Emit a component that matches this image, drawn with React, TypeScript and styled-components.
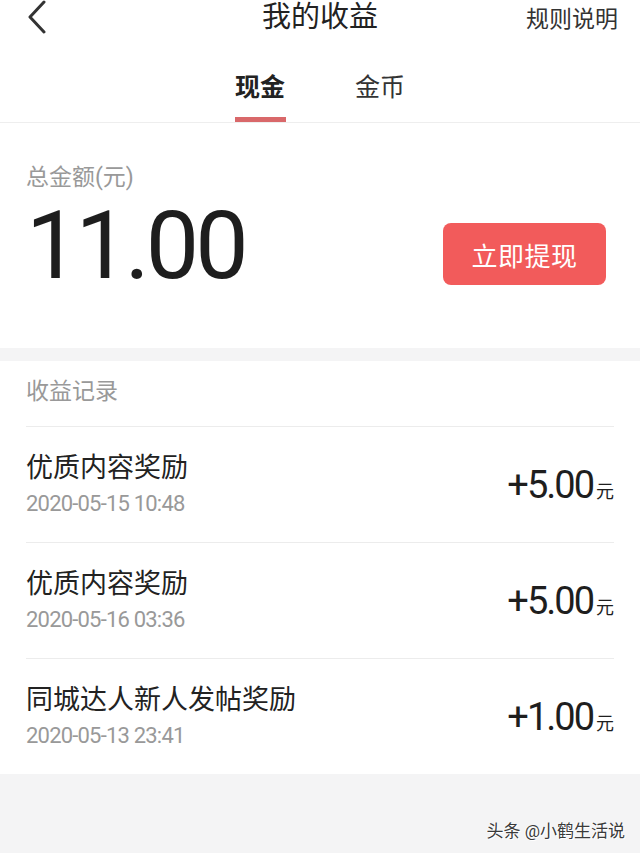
import styled, { createGlobalStyle } from "styled-components";

const GlobalStyle = createGlobalStyle`
  body {
    margin: 0;
    background: #f4f4f5;
    font-family: Roboto, "Noto Sans CJK SC", sans-serif;
    color: #222;
  }
`;

const Page = styled.div`
  width: 640px;
  min-height: 853px;
  background: #f4f4f5;
  display: flex;
  flex-direction: column;
`;

const Top = styled.div`
  background: #fff;
  border-bottom: 1px solid #eeeeee;
`;

const Header = styled.div`
  height: 34px;
  display: flex;
  align-items: center;
  justify-content: space-between;
  position: relative;
  padding: 0 22px 0 26px;
`;

const Title = styled.div`
  position: absolute;
  left: 0;
  right: 0;
  text-align: center;
  font-size: 29px;
  line-height: 34px;
  color: #222;
  pointer-events: none;
`;

const Back = styled.div`
  display: flex;
  align-items: center;
`;

const Rule = styled.div`
  font-size: 23px;
  color: #333;
`;

const Tabs = styled.div`
  height: 88px;
  display: flex;
  justify-content: center;
  gap: 69px;
`;

const Tab = styled.div<{ $active?: boolean }>`
  display: flex;
  flex-direction: column;
  align-items: center;
  padding-top: 39px;
  font-size: 25px;
  line-height: 30px;
  font-weight: ${(p) => (p.$active ? 700 : 400)};
  color: ${(p) => (p.$active ? "#222" : "#333")};
`;

const Underline = styled.div<{ $active?: boolean }>`
  width: 51px;
  height: 5px;
  margin-top: 14px;
  background: ${(p) => (p.$active ? "#d9686a" : "transparent")};
`;

const Summary = styled.div`
  background: #fff;
  padding: 40px 34px 57px 26px;
  display: flex;
  flex-direction: column;
  gap: 8px;
`;

const Label = styled.div`
  font-size: 23px;
  line-height: 30px;
  color: #999;
`;

const AmountRow = styled.div`
  display: flex;
  align-items: center;
  justify-content: space-between;
`;

const Total = styled.div`
  font-family: Roboto, sans-serif;
  font-size: 95px;
  line-height: 90px;
  letter-spacing: -4px;
  color: #1e1e1e;
`;

const Withdraw = styled.button`
  width: 163px;
  height: 62px;
  margin-top: 16px;
  border: none;
  border-radius: 8px;
  background: #f25b5b;
  color: #fff;
  font-family: "Noto Sans CJK SC", sans-serif;
  font-size: 26px;
  letter-spacing: 0.5px;
`;

const Records = styled.div`
  margin-top: 13px;
  background: #fff;
  padding: 0 26px;
`;

const RecordsHead = styled.div`
  height: 65px;
  padding-top: 16px;
  box-sizing: border-box;
  font-size: 23px;
  line-height: 30px;
  color: #999;
`;

const Row = styled.div`
  height: 115px;
  border-top: 1px solid #ececec;
  display: flex;
  align-items: center;
  justify-content: space-between;
`;

const RowText = styled.div`
  display: flex;
  flex-direction: column;
  gap: 5px;
`;

const RowTitle = styled.div`
  font-size: 27px;
  line-height: 34px;
  color: #222;
`;

const RowDate = styled.div`
  font-family: Roboto, sans-serif;
  font-size: 22px;
  line-height: 28px;
  letter-spacing: -0.8px;
  color: #999;
`;

const Amount = styled.div`
  font-family: Roboto, sans-serif;
  font-size: 38px;
  letter-spacing: -2px;
  color: #1e1e1e;
  display: flex;
  align-items: baseline;
`;

const Unit = styled.span`
  font-family: "Noto Sans CJK SC", sans-serif;
  font-size: 18px;
  letter-spacing: 0;
  margin-left: 3px;
`;

const Footer = styled.div`
  flex: 1;
  display: flex;
  justify-content: flex-end;
  padding: 43px 15px 0 0;
`;

const Watermark = styled.div`
  font-size: 17px;
  color: #3a3a3a;
  text-shadow: 1px 1px 0 #fff, -1px 0 0 #fff;
`;

const records = [
  { title: "优质内容奖励", date: "2020-05-15 10:48", amount: "+5.00" },
  { title: "优质内容奖励", date: "2020-05-16 03:36", amount: "+5.00" },
  { title: "同城达人新人发帖奖励", date: "2020-05-13 23:41", amount: "+1.00" },
];

export default function App() {
  return (
    <Page>
      <GlobalStyle />
      <Top>
        <Header>
          <Back>
            <svg width="22" height="34" viewBox="0 0 22 34" fill="none">
              <path d="M18 2 L4 17 L18 32" stroke="#333" strokeWidth="3" strokeLinecap="round" strokeLinejoin="round" />
            </svg>
          </Back>
          <Title>我的收益</Title>
          <Rule>规则说明</Rule>
        </Header>
        <Tabs>
          <Tab $active>
            现金
            <Underline $active />
          </Tab>
          <Tab>
            金币
            <Underline />
          </Tab>
        </Tabs>
      </Top>
      <Summary>
        <Label>总金额(元)</Label>
        <AmountRow>
          <Total>11.00</Total>
          <Withdraw>立即提现</Withdraw>
        </AmountRow>
      </Summary>
      <Records>
        <RecordsHead>收益记录</RecordsHead>
        {records.map((r, i) => (
          <Row key={i}>
            <RowText>
              <RowTitle>{r.title}</RowTitle>
              <RowDate>{r.date}</RowDate>
            </RowText>
            <Amount>
              {r.amount}
              <Unit>元</Unit>
            </Amount>
          </Row>
        ))}
      </Records>
      <Footer>
        <Watermark>头条 @小鹤生活说</Watermark>
      </Footer>
    </Page>
  );
}
